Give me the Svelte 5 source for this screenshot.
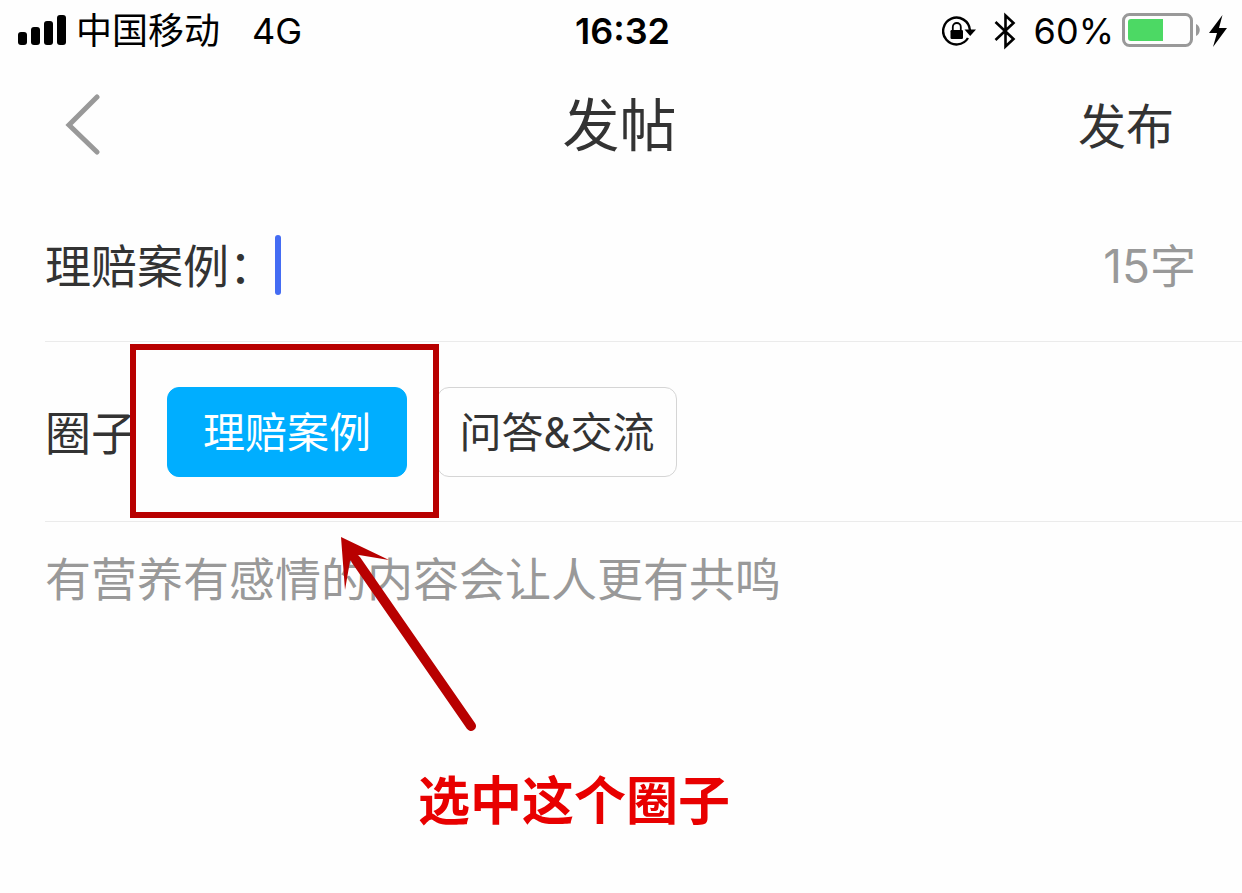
<script>
	const circles = ['理赔案例', '问答&交流'];

	let selected = $state(circles[0]);
	let title = $state('');
	let content = $state('');
	let charging = 60;
</script>

<div class="screen">
	<div class="status">
		<div class="carrier">
			<svg class="signal" width="48" height="30" viewBox="0 0 48 30" aria-hidden="true">
				<rect x="0" y="17" width="9" height="13" rx="3" />
				<rect x="13" y="12" width="9" height="18" rx="3" />
				<rect x="26" y="6" width="9" height="24" rx="3" />
				<rect x="39" y="0" width="9" height="30" rx="3" />
			</svg>
			<span>中国移动</span>
			<span class="network">4G</span>
		</div>
		<time>16:32</time>
		<div class="indicators">
			<svg class="lock" width="34" height="32" viewBox="0 0 34 32" aria-hidden="true">
				<path d="M26 23A13.400 13.400 0 1 1 27.900 15" fill="none" stroke="#000" stroke-width="2.400" />
				<path d="M22.500 14.500H34L28.200 21z" />
				<rect x="8.500" y="15" width="12.500" height="9" rx="1.200" />
				<path d="M10.800 16v-4a4 4 0 0 1 8 0v4" fill="none" stroke="#000" stroke-width="1.800" />
			</svg>
			<svg class="bluetooth" width="22" height="38" viewBox="0 0 22 38" aria-hidden="true">
				<path
					d="M1.500 10L19.500 27L11.500 34.500V3.500L19.500 11L1.500 28"
					fill="none"
					stroke="#000"
					stroke-width="2.600"
				/>
			</svg>
			<span>{charging}%</span>
			<svg class="battery" width="78" height="34" viewBox="0 0 78 34" aria-hidden="true">
				<rect x="1.500" y="1.500" width="68" height="31" rx="6" fill="none" stroke="#999" stroke-width="3" />
				<path d="M6 9a3 3 0 0 1 3-3h32v22H9a3 3 0 0 1-3-3z" fill="#4cd964" />
				<path d="M74 11c5 2 5 10 0 12z" fill="#999" />
			</svg>
			<svg width="18" height="32" viewBox="0 0 18 32" aria-hidden="true">
				<path d="M13.500 0L0 18h8L4 32L18 13h-8z" />
			</svg>
		</div>
	</div>

	<header>
		<button class="back" aria-label="返回">
			<svg width="36" height="62" viewBox="0 0 36 62" aria-hidden="true">
				<path d="M32 3L4 31L32 58" fill="none" stroke="#999" stroke-width="5" stroke-linecap="round" />
			</svg>
		</button>
		<h1>发帖</h1>
		<button class="publish">发布</button>
	</header>

	<main>
		<div class="row title">
			<label for="title">理赔案例：</label>
			<span class="cursor"></span>
			<input id="title" type="text" maxlength="15" bind:value={title} />
			<span class="count">{15 - title.length}字</span>
		</div>

		<div class="row circle">
			<span>圈子</span>
			{#each circles as circle}
				<button
					class="chip"
					class:active={circle === selected}
					aria-pressed={circle === selected}
					onclick={() => (selected = circle)}>{circle}</button
				>
			{/each}
		</div>

		<textarea
			aria-label="内容"
			placeholder="有营养有感情的内容会让人更有共鸣"
			bind:value={content}
		></textarea>

		<!-- hint laid over the form -->
		<div class="hint">
			<svg width="346" height="390" viewBox="0 0 346 390" aria-hidden="true">
				<rect x="3" y="3" width="303" height="168" fill="none" stroke="#b80000" stroke-width="6" />
				<path d="M226 216L341 382" stroke="#b80000" stroke-width="10" stroke-linecap="round" />
				<path d="M211 193L259 216L229 211L220 217L215 246z" fill="#b80000" />
			</svg>
			<p>选中这个圈子</p>
		</div>
	</main>
</div>

<style>
	:global(body) {
		margin: 0;
		background: #fefefe;
	}
	.screen {
		color: #333;
		font-family: Inter, 'Noto Sans CJK SC', sans-serif;
		overflow: hidden;
	}
	button,
	input,
	textarea {
		margin: 0;
		padding: 0;
		border: 0;
		background: none;
		color: inherit;
		font: inherit;
	}
	svg {
		display: block;
		flex: none;
	}

	.status {
		display: grid;
		grid-template-columns: 1fr auto 1fr;
		align-items: center;
		height: 62px;
		padding: 0 15px 0 18px;
		color: #000;
		font-size: 36px;
		line-height: 62px;
	}
	.carrier,
	.indicators {
		display: flex;
		align-items: center;
	}
	.carrier {
		gap: 10px;
	}
	.signal,
	.battery {
		padding-bottom: 2px;
	}
	.network {
		margin-left: 22px;
	}
	.indicators {
		justify-content: flex-end;
	}
	.lock {
		margin-right: 18px;
	}
	.bluetooth {
		margin-right: 18px;
	}
	.battery {
		margin: 0 9px 0 8px;
	}
	time {
		font-weight: 600;
	}

	header {
		display: grid;
		grid-template-columns: 1fr auto 1fr;
		align-items: center;
		height: 126px;
		padding: 0 68px 0 65px;
	}
	.back {
		justify-self: start;
	}
	h1 {
		margin: 0;
		padding-bottom: 8px;
		font-size: 57px;
		font-weight: 400;
	}
	.publish {
		justify-self: end;
		padding-bottom: 4px;
		font-size: 48px;
	}

	main {
		position: relative;
		padding-left: 45px;
		font-size: 46px;
	}
	.row {
		display: flex;
		align-items: center;
		border-bottom: 1px solid #ebebeb;
	}
	.row > label,
	.row > span:not(.cursor) {
		padding-bottom: 4px;
	}
	.title {
		height: 153px;
		padding-right: 46px;
	}
	.cursor {
		width: 6px;
		height: 60px;
		border-radius: 3px;
		background: #446cf3;
	}
	.title input {
		flex: 1;
		min-width: 0;
		outline: none;
		caret-color: transparent;
	}
	.count {
		color: #999;
	}
	.circle {
		height: 179px;
		gap: 30px;
	}
	.chip {
		box-sizing: border-box;
		min-width: 240px;
		height: 90px;
		padding-bottom: 4px;
		border: 1px solid #d5d5d5;
		border-radius: 12px;
		font-size: 42px;
	}
	.chip.active {
		border-color: #00aeff;
		background: #00aeff;
		color: #fff;
	}
	textarea {
		display: block;
		box-sizing: border-box;
		width: 100%;
		height: 360px;
		padding: 23px 45px 0 0;
		line-height: 68px;
		outline: none;
		resize: none;
	}
	textarea::placeholder {
		color: #999;
		opacity: 1;
	}

	.hint {
		position: absolute;
		top: 156px;
		left: 130px;
		pointer-events: none;
	}
	.hint p {
		margin: 30px 0 0 288px;
		color: #e80000;
		font-size: 52px;
		font-weight: 700;
		line-height: 76px;
		white-space: nowrap;
	}
</style>
